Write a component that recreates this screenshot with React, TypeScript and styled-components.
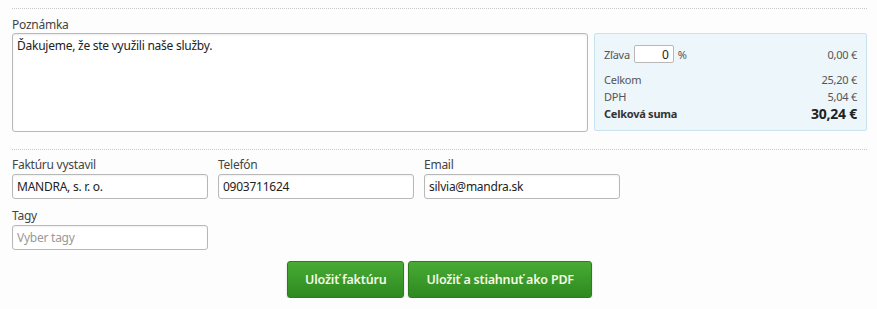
import styled, { createGlobalStyle } from "styled-components";

const GlobalStyle = createGlobalStyle`
  body {
    margin: 0;
    background: #fdfdfd;
    font-family: "Noto Sans", "Open Sans", sans-serif;
    font-size: 12px;
    letter-spacing: -0.25px;
    color: #333;
  }
`;

const BORDER = "#b8b8b8";

const Page = styled.div`
  padding: 8px 10px 0 12px;
`;

const Divider = styled.div`
  border-top: 1px dotted #c8c8c8;
`;

const NoteSection = styled.div`
  display: grid;
  grid-template-columns: 576px 1fr;
  column-gap: 6px;
  align-items: end;
  padding: 8px 0 17px;
`;

const Field = styled.div`
  display: flex;
  flex-direction: column;
`;

const Label = styled.label`
  font-size: 12px;
  line-height: 16px;
  color: #444;
`;

const NoteArea = styled.textarea`
  box-sizing: border-box;
  height: 99px;
  resize: none;
  border: 1px solid ${BORDER};
  border-radius: 3px;
  padding: 3px 4px;
  font: inherit;
  font-size: 12px;
  letter-spacing: -0.25px;
  color: #222;
  background: #fff;
  box-shadow: inset 0 1px 2px rgba(0, 0, 0, 0.08);
`;

const SummaryBox = styled.div`
  box-sizing: border-box;
  height: 98px;
  margin-bottom: 1px;
  background: #edf6fa;
  border: 1px solid #c9e3ee;
  border-radius: 2px;
  padding: 11px 9px 8px;
  display: flex;
  flex-direction: column;
`;

const SummaryRow = styled.div<{ $gapTop?: number }>`
  display: flex;
  align-items: center;
  justify-content: space-between;
  font-size: 11px;
  color: #555;
  line-height: 17px;
  margin-top: ${({ $gapTop }) => $gapTop ?? 0}px;
`;

const DiscountGroup = styled.div`
  display: flex;
  align-items: center;
  gap: 4px;
`;

const DiscountInput = styled.input`
  box-sizing: border-box;
  width: 40px;
  height: 18px;
  border: 1px solid ${BORDER};
  border-radius: 2px;
  text-align: right;
  padding: 0 4px;
  font: inherit;
  font-size: 12px;
  color: #222;
  background: #fff;
`;

const TotalLabel = styled.span`
  font-weight: bold;
  color: #333;
`;

const TotalValue = styled.span`
  font-weight: bold;
  font-size: 14px;
  color: #222;
`;

const FieldsGrid = styled.div`
  display: grid;
  grid-template-columns: repeat(3, 196px);
  column-gap: 10px;
  row-gap: 9px;
  padding-top: 7px;
`;

const TextInput = styled.input`
  box-sizing: border-box;
  height: 25px;
  margin-top: 1px;
  border: 1px solid ${BORDER};
  border-radius: 3px;
  padding: 0 4px;
  font: inherit;
  font-size: 12px;
  letter-spacing: -0.25px;
  color: #222;
  background: #fff;
  box-shadow: inset 0 1px 2px rgba(0, 0, 0, 0.06);

  &::placeholder {
    color: #999;
  }
`;

const Actions = styled.div`
  display: flex;
  justify-content: center;
  gap: 4px;
  padding-top: 11px;
`;

const GreenButton = styled.button`
  height: 37px;
  padding: 0 17px;
  border: 1px solid #2a7f1c;
  border-radius: 3px;
  background: linear-gradient(#48ab34, #2e8a20);
  color: #f4f8e4;
  font-family: inherit;
  font-size: 12.5px;
  font-weight: 600;
  letter-spacing: -0.2px;
  cursor: pointer;
  box-shadow: 0 1px 2px rgba(0, 0, 0, 0.2);
`;

const App = () => (
  <>
    <GlobalStyle />
    <Page>
      <Divider />
      <NoteSection>
        <Field>
          <Label>Poznámka</Label>
          <NoteArea defaultValue="Ďakujeme, že ste využili naše služby." />
        </Field>
        <SummaryBox>
          <SummaryRow>
            <DiscountGroup>
              Zľava <DiscountInput defaultValue="0" /> %
            </DiscountGroup>
            <span>0,00 €</span>
          </SummaryRow>
          <SummaryRow $gapTop={8}>
            <span>Celkom</span>
            <span>25,20 €</span>
          </SummaryRow>
          <SummaryRow>
            <span>DPH</span>
            <span>5,04 €</span>
          </SummaryRow>
          <SummaryRow>
            <TotalLabel>Celková suma</TotalLabel>
            <TotalValue>30,24 €</TotalValue>
          </SummaryRow>
        </SummaryBox>
      </NoteSection>
      <Divider />
      <FieldsGrid>
        <Field>
          <Label>Faktúru vystavil</Label>
          <TextInput defaultValue="MANDRA, s. r. o." />
        </Field>
        <Field>
          <Label>Telefón</Label>
          <TextInput defaultValue="0903711624" />
        </Field>
        <Field>
          <Label>Email</Label>
          <TextInput defaultValue="silvia@mandra.sk" />
        </Field>
        <Field>
          <Label>Tagy</Label>
          <TextInput placeholder="Vyber tagy" />
        </Field>
      </FieldsGrid>
      <Actions>
        <GreenButton>Uložiť faktúru</GreenButton>
        <GreenButton>Uložiť a stiahnuť ako PDF</GreenButton>
      </Actions>
    </Page>
  </>
);

export default App;
